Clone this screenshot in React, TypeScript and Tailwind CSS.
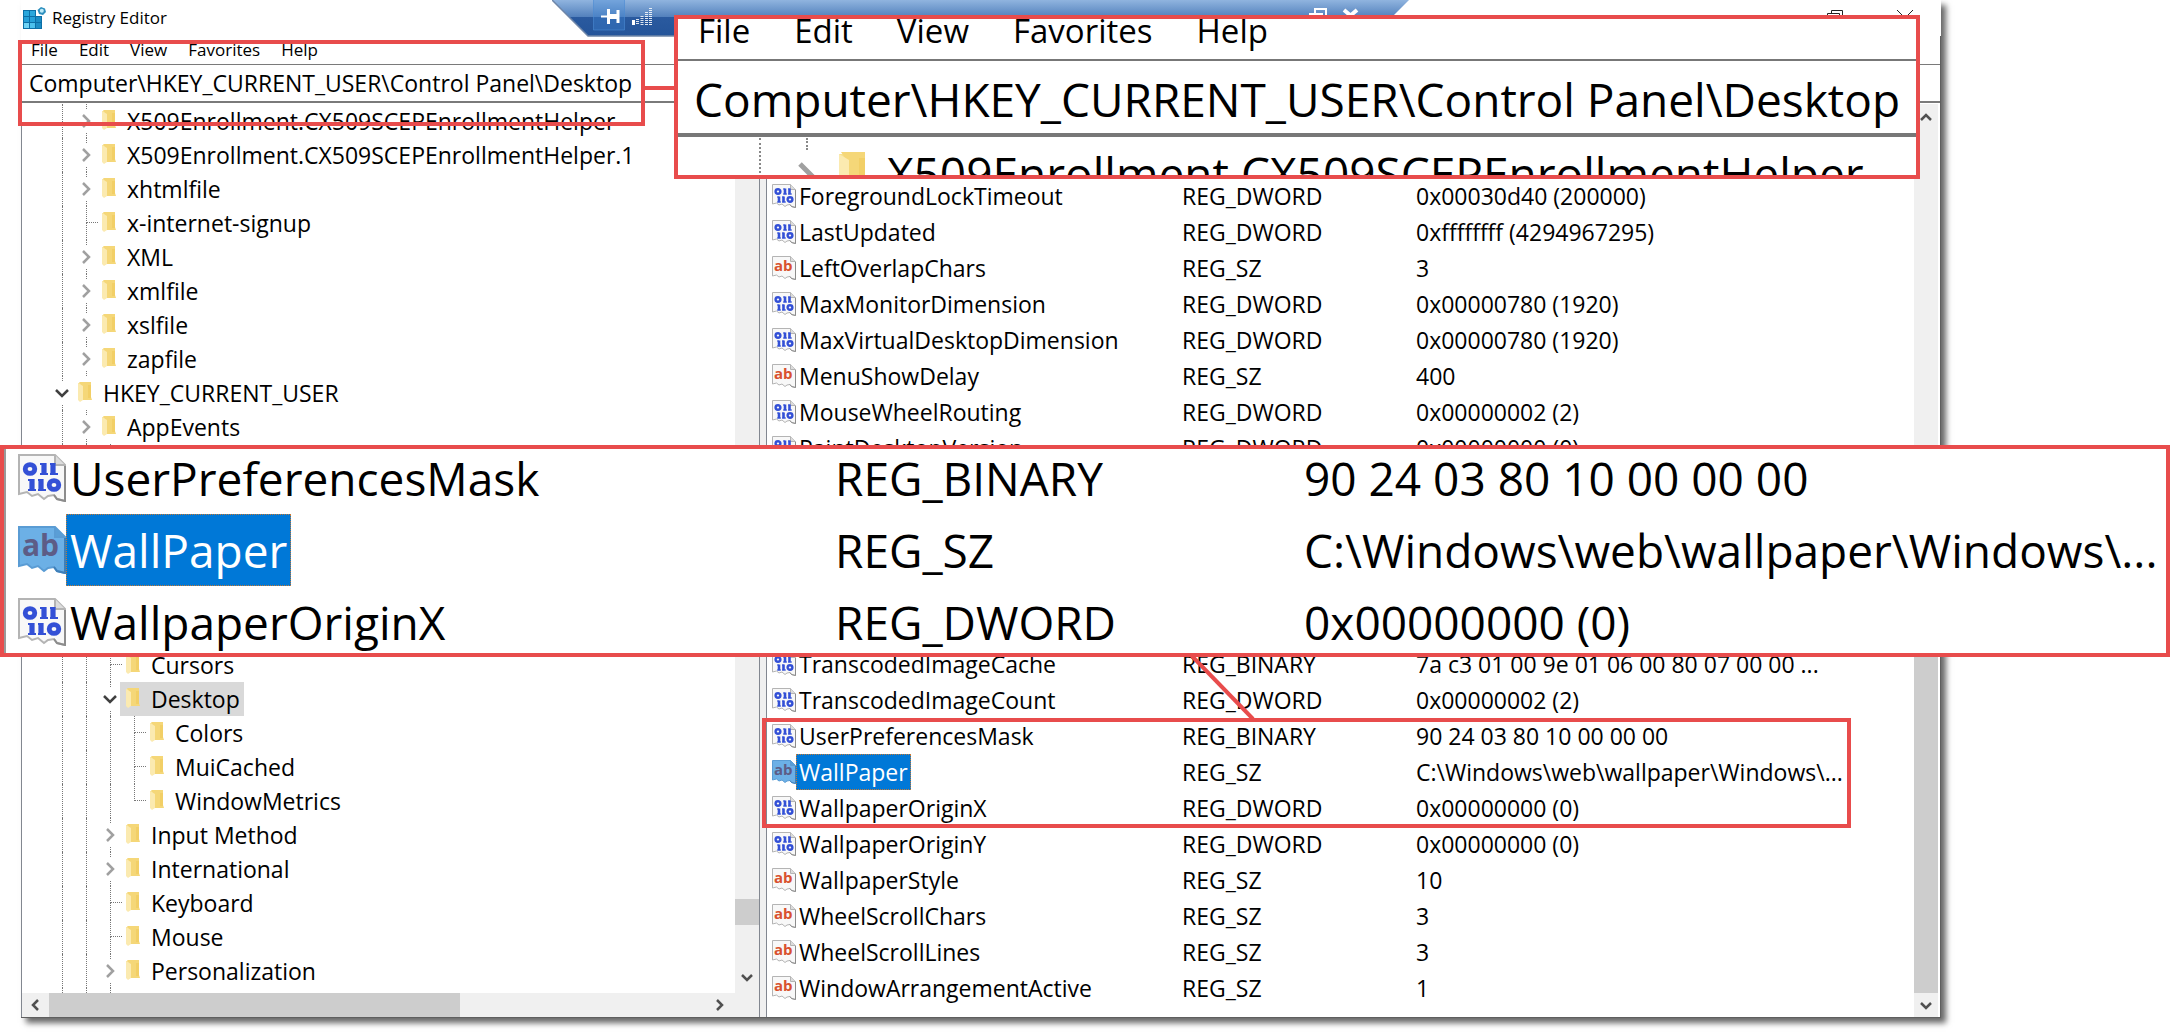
/**
 * Registry Editor -- desktop wallpaper key, with the two magnified callouts
 * that sit on top of the window.
 */

import { clsx } from "clsx";
import type { ReactNode } from "react";

type ValueType = "REG_DWORD" | "REG_SZ" | "REG_BINARY";

interface RegValue {
  name: string;
  type: ValueType;
  data: string;
  selected?: boolean;
}

interface TreeNode {
  label: string;
  depth: number;
  state: "open" | "closed" | "leaf";
  last?: boolean;
  selected?: boolean;
}

const MENU = ["File", "Edit", "View", "Favorites", "Help"];
const ADDRESS = "Computer\\HKEY_CURRENT_USER\\Control Panel\\Desktop";

const TREE_TOP: TreeNode[] = [
  { label: "X509Enrollment.CX509SCEPEnrollmentHelper", depth: 1, state: "closed" },
  { label: "X509Enrollment.CX509SCEPEnrollmentHelper.1", depth: 1, state: "closed" },
  { label: "xhtmlfile", depth: 1, state: "closed" },
  { label: "x-internet-signup", depth: 1, state: "leaf" },
  { label: "XML", depth: 1, state: "closed" },
  { label: "xmlfile", depth: 1, state: "closed" },
  { label: "xslfile", depth: 1, state: "closed" },
  { label: "zapfile", depth: 1, state: "closed" },
  { label: "HKEY_CURRENT_USER", depth: 0, state: "open" },
  { label: "AppEvents", depth: 1, state: "closed" },
];

const TREE_BOTTOM: TreeNode[] = [
  { label: "Cursors", depth: 2, state: "leaf" },
  { label: "Desktop", depth: 2, state: "open", selected: true },
  { label: "Colors", depth: 3, state: "leaf" },
  { label: "MuiCached", depth: 3, state: "leaf" },
  { label: "WindowMetrics", depth: 3, state: "leaf", last: true },
  { label: "Input Method", depth: 2, state: "closed" },
  { label: "International", depth: 2, state: "closed" },
  { label: "Keyboard", depth: 2, state: "leaf" },
  { label: "Mouse", depth: 2, state: "leaf" },
  { label: "Personalization", depth: 2, state: "closed" },
];

const VALUES_TOP: RegValue[] = [
  { name: "ForegroundLockTimeout", type: "REG_DWORD", data: "0x00030d40 (200000)" },
  { name: "LastUpdated", type: "REG_DWORD", data: "0xffffffff (4294967295)" },
  { name: "LeftOverlapChars", type: "REG_SZ", data: "3" },
  { name: "MaxMonitorDimension", type: "REG_DWORD", data: "0x00000780 (1920)" },
  { name: "MaxVirtualDesktopDimension", type: "REG_DWORD", data: "0x00000780 (1920)" },
  { name: "MenuShowDelay", type: "REG_SZ", data: "400" },
  { name: "MouseWheelRouting", type: "REG_DWORD", data: "0x00000002 (2)" },
  { name: "PaintDesktopVersion", type: "REG_DWORD", data: "0x00000000 (0)" },
];

const WALLPAPER_VALUES: RegValue[] = [
  { name: "UserPreferencesMask", type: "REG_BINARY", data: "90 24 03 80 10 00 00 00" },
  { name: "WallPaper", type: "REG_SZ", data: "C:\\Windows\\web\\wallpaper\\Windows\\...", selected: true },
  { name: "WallpaperOriginX", type: "REG_DWORD", data: "0x00000000 (0)" },
];

const VALUES_BOTTOM: RegValue[] = [
  { name: "TranscodedImageCache", type: "REG_BINARY", data: "7a c3 01 00 9e 01 06 00 80 07 00 00 ..." },
  { name: "TranscodedImageCount", type: "REG_DWORD", data: "0x00000002 (2)" },
  ...WALLPAPER_VALUES,
  { name: "WallpaperOriginY", type: "REG_DWORD", data: "0x00000000 (0)" },
  { name: "WallpaperStyle", type: "REG_SZ", data: "10" },
  { name: "WheelScrollChars", type: "REG_SZ", data: "3" },
  { name: "WheelScrollLines", type: "REG_SZ", data: "3" },
  { name: "WindowArrangementActive", type: "REG_SZ", data: "1" },
];

export default function App() {
  return (
    <div className="relative overflow-hidden bg-white pb-[15px] font-['Open_Sans','Noto_Sans',sans-serif] text-black">
      <main className="mr-[229px] ml-[21px] shadow-[5px_5px_6px_rgba(0,0,0,0.6)]">
        <TitleBar />
        <div className="border-r border-b border-[#5f5f5f]">
          <nav className="flex h-7 items-center gap-[21px] px-[10px] text-[17px]">
            {MENU.map((m) => (
              <button key={m}>{m}</button>
            ))}
          </nav>
          <input
            aria-label="Address"
            readOnly
            value={ADDRESS}
            className="block h-[39px] w-full border-t border-b-2 border-[#7a7a7a] px-2 text-[23px] outline-none"
          />
          <div className="flex pt-px">
            <KeyTree />
            <div className="w-2 shrink-0 border-x border-[#828790] bg-[#f0f0f0]" />
            <ValueList />
          </div>
        </div>
      </main>

      <RemoteBar />
      <Annotations />
      <AddressCallout />
      <ValueCallout />
    </div>
  );
}

function TitleBar() {
  return (
    <header className="flex h-9 items-center gap-[5px] bg-white px-[1px] text-[17px]">
      <RegeditLogo />
      <h1 className="flex-1">Registry Editor</h1>
      <button aria-label="Restore" className="mr-12">
        <svg className="block size-4" viewBox="0 0 16 16" fill="none" stroke="#222">
          <path d="M4.5 3.5v-3h11v11h-3M.5 3.5h12v12H.5z" />
        </svg>
      </button>
      <button aria-label="Close" className="mr-[26px]">
        <svg className="block size-[18px]" viewBox="0 0 18 18" fill="none" stroke="#222">
          <path d="M1 1l16 16M17 1L1 17" />
        </svg>
      </button>
    </header>
  );
}

function RegeditLogo() {
  return (
    <svg className="block h-6 w-[25px]" viewBox="0 0 25 24">
      <path d="M1 4h13v6h6v13H1z" fill="#0c6fa6" />
      <path d="M2 5h5v5H2zM8 5h5v5H8z" fill="#2aa7dc" />
      <path d="M2 11h5v5H2zM8 11h5v5H8z" fill="#25a0d8" />
      <path d="M14 11h5v5h-5zM14 17h5v5h-5z" fill="#1b8cc4" />
      <path d="M2 17h5v5H2z" fill="#6fd3f5" />
      <path d="M8 17h5v5H8z" fill="#4cc0ec" />
      <path d="M19 1l4 1.500 1 3.500-3 3-4-1-1.500-4z" fill="#2d8fbe" />
      <circle cx="19.800" cy="4.800" r="2" fill="#bdeaf8" />
    </svg>
  );
}

// Connection bar of the remote session, hanging from the top edge
function RemoteBar() {
  return (
    <svg className="absolute top-0 left-[552px] h-[37px] w-[857px]" viewBox="0 0 857 37">
      <defs>
        <linearGradient id="bar" x1="0" y1="0" x2="0" y2="1">
          <stop offset="0" stopColor="#90b4df" />
          <stop offset="0.460" stopColor="#5482bd" />
          <stop offset="0.470" stopColor="#2a5a9f" />
          <stop offset="1" stopColor="#245499" />
        </linearGradient>
      </defs>
      <path d="M0 0h857l-36 36H36z" fill="url(#bar)" />
      <path d="M0 0l36 36h785" fill="none" stroke="#6f86a8" strokeWidth="1.500" />
      <path d="M41.500-1h31v31h-31z" fill="#3f86d8" fillOpacity="0.350" stroke="#4a8ad4" strokeOpacity="0.600" />
      {/* pin */}
      <path d="M49 16.500h6" stroke="#fff" strokeWidth="2" />
      <path d="M56.500 9v15M66 10v13" stroke="#fff" strokeWidth="3" />
      <path d="M57 16.500h9" stroke="#fff" strokeWidth="5" />
      <g stroke="#fff" strokeWidth="3" strokeDasharray="1 1">
        <path d="M85.500 19v6M90 16v9M94.500 12v13M98.500 8v17" strokeOpacity="0.850" />
      </g>
      <path d="M80 20h3v5h-3z" fill="#fff" />
      <path d="M763 13V9h11v8h-4M758 14h12v8h-12z" fill="none" stroke="#fff" strokeWidth="2" />
      <path d="M792 10l13 11M805 10l-13 11" stroke="#fff" strokeWidth="4" />
    </svg>
  );
}

function KeyTree() {
  return (
    <section className="flex w-[738px] shrink-0 flex-col border-l border-[#828790]" aria-label="Keys">
      <div className="flex flex-1">
        <ul className="min-w-0 flex-1 pl-7 text-[23px]">
          {TREE_TOP.map((n) => (
            <TreeRow key={n.label} node={n} />
          ))}
          {/* collapsed stretch: guides only */}
          <li className="flex h-[204px]" aria-hidden>
            <Guide />
            <Guide />
            <Guide />
          </li>
          {TREE_BOTTOM.map((n) => (
            <TreeRow key={n.label} node={n} />
          ))}
          <li className="flex h-[5px]" aria-hidden>
            <Guide />
            <Guide />
            <Guide />
          </li>
        </ul>
        <div className="flex w-6 flex-col bg-[#f0f0f0] pb-1">
          <ScrollButton dir="up" />
          <div className="mt-auto mb-10 h-[26px] bg-[#cdcdcd]" />
          <ScrollButton dir="down" />
        </div>
      </div>
      <div className="flex h-6 bg-[#f0f0f0] pl-[2px]">
        <ScrollButton dir="left" />
        <div className="ml-px w-[411px] bg-[#cdcdcd]" />
        <div className="flex-1" />
        <ScrollButton dir="right" />
        <div className="w-7" />
      </div>
    </section>
  );
}

function Guide() {
  return (
    <span className="flex w-6 shrink-0 justify-end">
      <span className="w-3 border-l border-dotted border-[#777]" />
    </span>
  );
}

function TreeRow({ node }: { node: TreeNode }) {
  const guides = Array.from({ length: node.depth });
  return (
    <li className="flex h-[34px]">
      {guides.map((_, i) => (
        <Guide key={i} />
      ))}
      {node.state === "leaf" ? (
        <span className="flex w-6 shrink-0 flex-col items-end">
          <span className="h-[17px] w-3 border-b border-l border-dotted border-[#777]" />
          {!node.last && <span className="h-[17px] w-3 border-l border-dotted border-[#777]" />}
        </span>
      ) : (
        <button
          aria-label={node.state === "open" ? "Collapse" : "Expand"}
          className="flex w-6 shrink-0 flex-col items-center justify-between"
        >
          <span className="ml-px h-[5px] border-l border-dotted border-[#777]" />
          <TreeChevron open={node.state === "open"} />
          <span className="ml-px h-[5px] border-l border-dotted border-[#777]" />
        </button>
      )}
      <a
        href="#key"
        className={clsx(
          "-ml-0.5 flex items-center gap-[11px] pr-1 pl-1.5 whitespace-nowrap",
          node.selected && "bg-[#d9d9d9]"
        )}
      >
        <FolderIcon className="mb-[2px] h-5 w-[14px]" />
        {node.label}
      </a>
    </li>
  );
}

function TreeChevron({ open }: { open: boolean }) {
  return open ? (
    <svg className="block h-[9px] w-[14px]" viewBox="0 0 14 9" fill="none" stroke="#404040" strokeWidth="2.500">
      <path d="M1 1l6 6 6-6" />
    </svg>
  ) : (
    <svg className="block h-[14px] w-[9px]" viewBox="0 0 9 14" fill="none" stroke="#a0a0a0" strokeWidth="2.500">
      <path d="M1 1l6 6-6 6" />
    </svg>
  );
}

function FolderIcon({ className }: { className: string }) {
  return (
    <svg className={clsx("block shrink-0", className)} viewBox="0 0 14 20" preserveAspectRatio="none">
      <path d="M0 1h9v17H0z" fill="#f7e08f" />
      <path d="M1 0h12v15l1 3H5V6z" fill="#f5d778" />
      <path d="M0 1l5 3v14l-3 2-2-2z" fill="#fbeab0" />
      <path d="M10 3h3v13h-3z" fill="#f2cf66" />
    </svg>
  );
}

function ScrollButton({ dir }: { dir: "up" | "down" | "left" | "right" }) {
  const paths = {
    up: "M7 14l5-5 5 5",
    down: "M7 10l5 5 5-5",
    left: "M14 7l-5 5 5 5",
    right: "M10 7l5 5-5 5",
  };
  return (
    <button aria-label={`Scroll ${dir}`} className="block size-6 shrink-0">
      <svg className="block size-6" viewBox="0 0 24 24" fill="none" stroke="#505050" strokeWidth="2.500">
        <path d={paths[dir]} />
      </svg>
    </button>
  );
}

function ValueList() {
  return (
    <section className="flex min-w-0 flex-1" aria-label="Values">
      <div className="min-w-0 flex-1 pt-[74px]">
        <table className="w-full table-fixed text-left text-[23px]">
          <colgroup>
            <col className="w-[415px]" />
            <col className="w-[234px]" />
            <col />
          </colgroup>
          <tbody>
            {VALUES_TOP.map((v) => (
              <ValueRow key={v.name} value={v} />
            ))}
            <tr className="h-[180px]" aria-hidden>
              <td colSpan={3} />
            </tr>
            {VALUES_BOTTOM.map((v) => (
              <ValueRow key={v.name} value={v} />
            ))}
          </tbody>
        </table>
      </div>
      <div className="mr-[2px] flex w-6 flex-col bg-[#f0f0f0] pt-[2px]">
        <ScrollButton dir="up" />
        <div className="h-[360px]" />
        <div className="flex-1 bg-[#cdcdcd]" />
        <ScrollButton dir="down" />
      </div>
    </section>
  );
}

function ValueRow({ value, large }: { value: RegValue; large?: boolean }) {
  return (
    <tr className={large ? "h-[72px]" : "h-9"}>
      <td className="p-0">
        <div className={clsx("flex items-center", large ? "h-[72px] pl-3" : "h-9 pl-[5px]")}>
          <ValueIcon
            type={value.type}
            selected={value.selected}
            className={large ? "size-12" : "size-6"}
          />
          <span
            className={clsx(
              "flex h-full items-center",
              large ? "px-1" : "px-[3px]",
              value.selected && "bg-[#0078d7] text-white outline-1 -outline-offset-1 outline-[#c47a35] outline-dotted"
            )}
          >
            {value.name}
          </span>
        </div>
      </td>
      <td className="p-0 whitespace-nowrap">{value.type}</td>
      <td className="p-0 whitespace-nowrap">{value.data}</td>
    </tr>
  );
}

// Torn sheet: red "ab" for strings, blue bits for numbers
function ValueIcon({ type, selected, className }: { type: ValueType; selected?: boolean; className: string }) {
  const page = selected ? "#6cb0e6" : "#f8f8f8";
  const edge = selected ? "#5a9cd4" : "#b4b4b4";
  return (
    <svg className={clsx("block shrink-0", className)} viewBox="0 0 24 24">
      <path
        d="M.5.5h18l5 5v18l-4-1-1.500-2-3 .5-2 1.500-3-2.500-3 1-2.500-2-4 1z"
        fill={page}
        stroke={edge}
      />
      <path d="M18.500.5v5h5" fill={selected ? "#5a9ed6" : "#dcdcdc"} stroke={edge} />
      <path d="M23.500 6v17.500l-4-1-1.500-2" fill="none" stroke={selected ? "#3f7fb8" : "#8c8c8c"} />
      {type === "REG_SZ" ? (
        <text
          x="2"
          y="15"
          fontSize="15"
          fontWeight="700"
          fontFamily="'Open Sans', sans-serif"
          fill={selected ? "#5d5c86" : "#d9512f"}
        >
          ab
        </text>
      ) : (
        <g fill="none" stroke="#3350d6">
          <ellipse cx="6" cy="7.500" rx="2.400" ry="2.200" strokeWidth="2.400" />
          <ellipse cx="18" cy="15.500" rx="2.400" ry="2.200" strokeWidth="2.400" />
          <path d="M13 4.500v6M17.500 4.500v6M7 12.500v6M11.500 12.500v6" strokeWidth="2.600" />
          <path d="M11 5h2M16 5h2M11 10h4M16 10h4M5 13h2M10 13h2M5 18h4M10 18h4" />
        </g>
      )}
    </svg>
  );
}

function Annotations() {
  return (
    <>
      <div className="absolute top-10 left-[18px] h-[86px] w-[627px] border-4 border-[#e84c4c]" />
      <div className="absolute top-[86px] left-[645px] h-1 w-[29px] bg-[#e84c4c]" />
      <div className="absolute top-[718px] right-[319px] left-[762px] h-[110px] border-4 border-[#e84c4c]" />
      <svg className="absolute top-[655px] left-[1189px] h-[65px] w-[67px]" viewBox="0 0 67 65">
        <path d="M2 0l62 64" stroke="#e84c4c" strokeWidth="4" />
      </svg>
    </>
  );
}

function Callout({ className, children }: { className: string; children: ReactNode }) {
  return (
    <aside className={clsx("absolute overflow-hidden border-4 border-[#e84c4c] bg-white", className)}>
      {children}
    </aside>
  );
}

function AddressCallout() {
  return (
    <Callout className="top-[15px] right-[250px] left-[674px] h-[164px]">
      <nav className="flex h-10 items-start gap-11 px-5 text-[33px] leading-6">
        {MENU.map((m) => (
          <button key={m}>{m}</button>
        ))}
      </nav>
      <input
        aria-label="Address, enlarged"
        readOnly
        value={ADDRESS}
        className="block h-[78px] w-full border-t-2 border-b-4 border-[#777] px-4 pt-1 text-[46px] outline-none"
      />
      <div className="flex h-[72px] pt-px pl-[57px] text-[46px]">
        <span className="flex w-12 justify-end">
          <span className="w-6 border-l-2 border-dotted border-[#888]" />
        </span>
        <span className="flex w-12 flex-col items-center gap-3">
          <span className="h-3 border-l-2 border-dotted border-[#888]" />
          <svg className="block h-7 w-[18px]" viewBox="0 0 9 14" fill="none" stroke="#a0a0a0" strokeWidth="2.500">
            <path d="M1 1l6 6-6 6" />
          </svg>
        </span>
        <span className="flex items-center gap-5 pl-2">
          <FolderIcon className="mb-1 h-10 w-7" />
          {TREE_TOP[0].label}
        </span>
      </div>
    </Callout>
  );
}

function ValueCallout() {
  return (
    <Callout className="inset-x-0 top-[445px] h-[212px]">
      <table className="-mt-[7px] w-full table-fixed border-l-2 border-[#9a9a9a] text-left text-[46px]">
        <colgroup>
          <col className="w-[830px]" />
          <col className="w-[469px]" />
          <col />
        </colgroup>
        <tbody>
          {WALLPAPER_VALUES.map((v) => (
            <ValueRow key={v.name} value={v} large />
          ))}
        </tbody>
      </table>
    </Callout>
  );
}
